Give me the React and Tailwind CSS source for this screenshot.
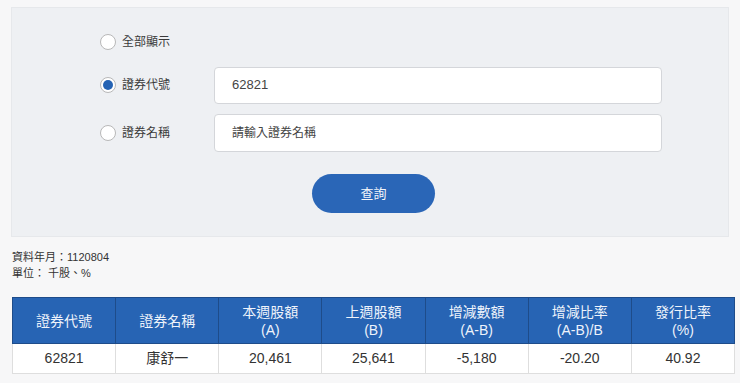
import React from "react";

const cols = [
  ["證券代號"],
  ["證券名稱"],
  ["本週股額", "(A)"],
  ["上週股額", "(B)"],
  ["增減數額", "(A-B)"],
  ["增減比率", "(A-B)/B"],
  ["發行比率", "(%)"],
];

const row = ["62821", "康舒一", "20,461", "25,641", "-5,180", "-20.20", "40.92"];

function Radio({ checked, label }) {
  return (
    <label className="flex items-center gap-[6px] w-[114px] text-[12px] text-[#3a3a3a]">
      <span className="w-[16px] h-[16px] rounded-full bg-white border border-[#b8b8b8] flex items-center justify-center">
        {checked && <span className="w-[10px] h-[10px] rounded-full bg-[#2563b4]"></span>}
      </span>
      {label}
    </label>
  );
}

export default function App() {
  return (
    <div
      className="w-[740px] h-[383px] bg-[#f7f7f8] px-[11px] pt-[7px] overflow-hidden"
      style={{ fontFamily: '"Liberation Sans", "Noto Sans CJK TC", sans-serif' }}
    >
      {/* 查詢條件 */}
      <div className="h-[230px] bg-[#eef0f3] border border-[#e6e8eb] pl-[88px] pt-[15px]">
        <div className="flex items-center h-[38px]">
          <Radio label="全部顯示" />
        </div>
        <div className="flex items-center h-[38px] mt-[5px]">
          <Radio checked label="證券代號" />
          <div className="w-[448px] h-[37px] bg-white border border-[#d4d6da] rounded-[4px] flex items-center px-[17px] text-[13px] text-[#444]">
            62821
          </div>
        </div>
        <div className="flex items-center h-[38px] mt-[10px]">
          <Radio label="證券名稱" />
          <div className="w-[448px] h-[38px] bg-white border border-[#d4d6da] rounded-[4px] flex items-center px-[17px] text-[12px] text-[#444]">
            請輸入證券名稱
          </div>
        </div>
        <div className="flex mt-[22px] pl-[212px]">
          <button className="w-[123px] h-[39px] rounded-full bg-[#2a66b7] text-[#f2f5fa] text-[13px]">
            查詢
          </button>
        </div>
      </div>

      <div className="mt-[12px] pl-[1px] text-[11px] leading-[16px] text-[#333]">
        <div>資料年月：1120804</div>
        <div>單位： 千股、%</div>
      </div>

      <table className="mt-[16px] ml-[1px] w-[723px] border-collapse table-fixed">
        <thead>
          <tr className="h-[46px] bg-[#2764b4]">
            {cols.map((c, i) => (
              <th
                key={i}
                className="border border-[#1e4c8a] font-normal text-[14px] leading-[18px] text-[#eef3fb] text-center"
              >
                {c.map((t, j) => (
                  <div key={j}>{t}</div>
                ))}
              </th>
            ))}
          </tr>
        </thead>
        <tbody>
          <tr className="h-[30px] bg-white">
            {row.map((v, i) => (
              <td key={i} className="border border-[#dedede] text-center text-[14px] text-[#333]">
                {v}
              </td>
            ))}
          </tr>
        </tbody>
      </table>
    </div>
  );
}
